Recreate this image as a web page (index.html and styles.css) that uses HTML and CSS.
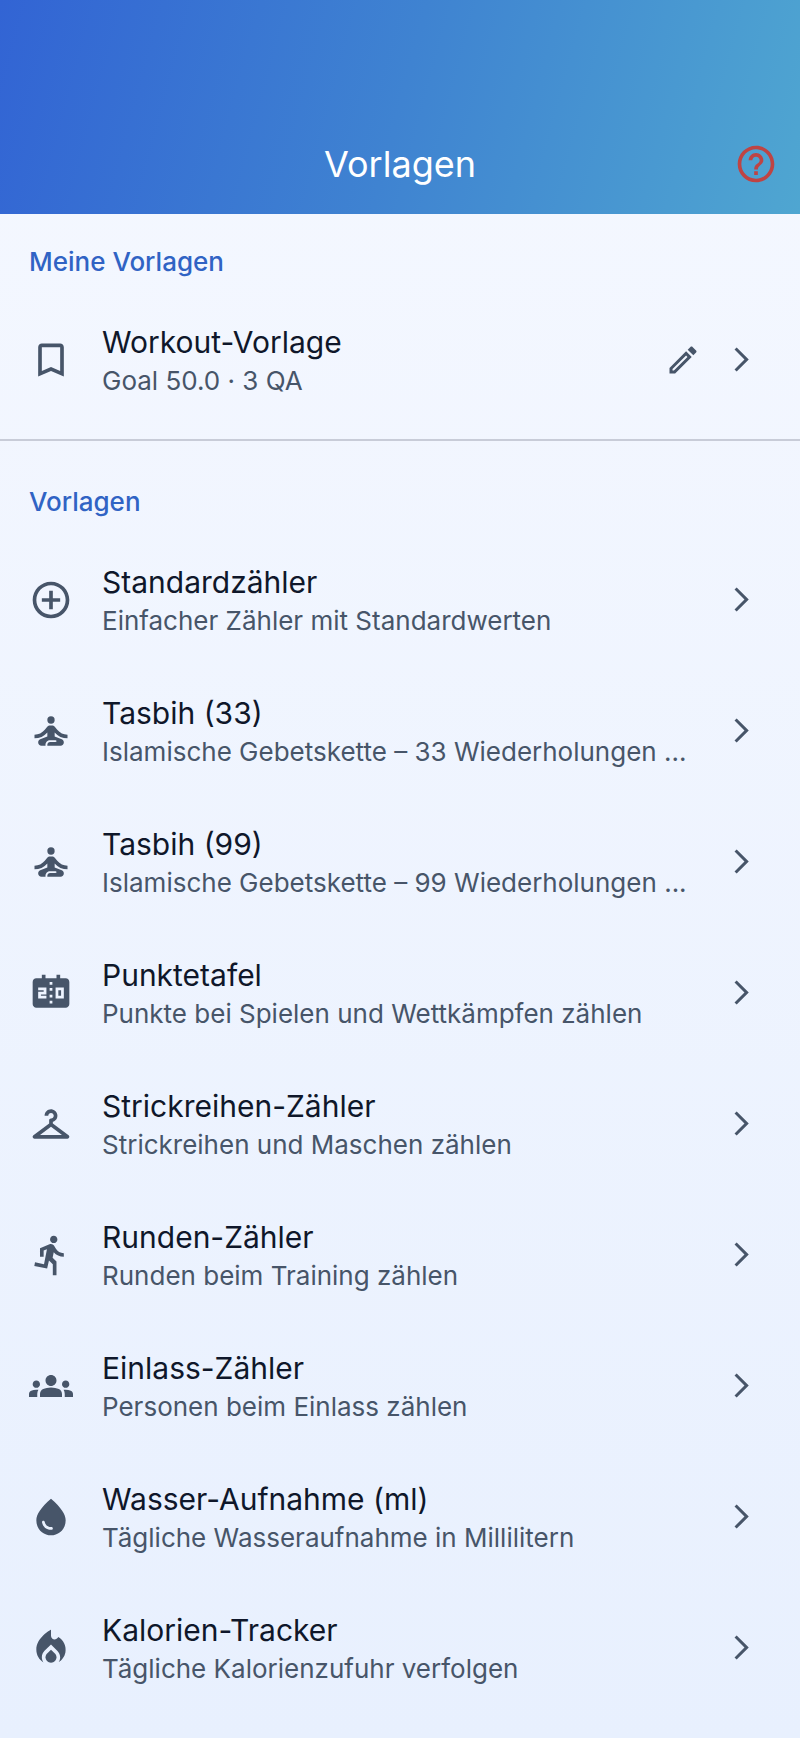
FILE: index.html
```
<!DOCTYPE html>
<html lang="de">
<head>
    <meta charset="UTF-8">
    <meta name="viewport" content="width=device-width, initial-scale=1.0">
    <title>Vorlagen</title>
    <link rel="stylesheet" href="styles.css">
</head>
<body>
    <!-- Icon set -->
    <svg class="sprite" aria-hidden="true">
        <symbol id="help" viewBox="0 0 24 24"><path d="M11 18h2v-2h-2v2zm1-16C6.48 2 2 6.48 2 12s4.48 10 10 10 10-4.48 10-10S17.52 2 12 2zm0 18c-4.41 0-8-3.59-8-8s3.59-8 8-8 8 3.59 8 8-3.59 8-8 8zm0-14c-2.21 0-4 1.79-4 4h2c0-1.1.9-2 2-2s2 .9 2 2c0 2-3 1.75-3 5h2c0-2.25 3-2.5 3-5 0-2.21-1.79-4-4-4z"/></symbol>
        <symbol id="chevron" viewBox="0 0 24 24"><path d="M6.23 20.23L8 22l10-10L8 2 6.23 3.77 14.46 12z"/></symbol>
        <symbol id="edit" viewBox="0 0 24 24"><path d="M14.06 9.02l.92.92L5.92 19H5v-.92l9.06-9.06M17.66 3c-.25 0-.51.1-.7.29l-1.83 1.83 3.75 3.75 1.83-1.83c.39-.39.39-1.02 0-1.41l-2.34-2.34c-.2-.2-.45-.29-.71-.29zm-3.6 3.19L3 17.25V21h3.75L17.81 9.94l-3.75-3.75z"/></symbol>
        <symbol id="bookmark" viewBox="0 0 24 24"><path d="M17 3H7c-1.1 0-1.99.9-1.99 2L5 21l7-3 7 3V5c0-1.1-.9-2-2-2zm0 15l-5-2.18L7 18V5h10v13z"/></symbol>
        <symbol id="add" viewBox="0 0 24 24"><path d="M13 7h-2v4H7v2h4v4h2v-4h4v-2h-4V7zm-1-5C6.48 2 2 6.48 2 12s4.48 10 10 10 10-4.48 10-10S17.52 2 12 2zm0 18c-4.41 0-8-3.59-8-8s3.59-8 8-8 8 3.59 8 8-3.59 8-8 8z"/></symbol>
        <symbol id="meditation" viewBox="0 0 24 24"><circle cx="12" cy="6" r="2"/><path d="M21 16v-2c-2.24 0-4.16-.96-5.6-2.68l-1.34-1.6C13.68 9.26 13.12 9 12.53 9h-1.05c-.6 0-1.15.26-1.53.72l-1.34 1.6C7.16 13.04 5.24 14 3 14v2c2.77 0 5.19-1.17 7-3.25V15l-3.88 1.55C5.45 16.82 5 17.48 5 18.21 5 19.2 5.8 20 6.79 20H9v-.5c0-1.38 1.12-2.5 2.5-2.5h3c.28 0 .5.22.5.5s-.22.5-.5.5h-3c-.83 0-1.5.67-1.5 1.5v.5h7.21c.99 0 1.79-.8 1.79-1.79 0-.73-.45-1.39-1.12-1.66L14 15v-2.25c1.81 2.08 4.23 3.25 7 3.25z"/></symbol>
        <symbol id="scoreboard" viewBox="0 0 24 24">
            <path d="M20 4h-3V2h-2v2H9V2H7v2H4c-1.1 0-2 .9-2 2v12c0 1.1.9 2 2 2h16c1.1 0 2-.9 2-2V6c0-1.1-.9-2-2-2z"/>
            <g class="board-line">
                <polyline points="5,9.75 8.75,9.75 8.75,12 5.75,12 5.75,14.25 9.5,14.25"/>
                <rect x="15.25" y="9.75" width="3" height="4.5"/>
                <path d="M12 6v1.5M12 9.25v1.5M12 13v1.5M12 16.25v1.5"/>
            </g>
        </symbol>
        <symbol id="hanger" viewBox="0 0 24 24"><path d="M21.6 18.2L13 11.75v-.91c1.65-.49 2.8-2.17 2.43-4.05-.26-1.31-1.3-2.4-2.61-2.7C10.54 3.57 8.5 5.3 8.5 7.5h2c0-.83.67-1.5 1.5-1.5s1.5.67 1.5 1.5c0 .84-.69 1.52-1.53 1.5-.54-.01-.97.45-.97.99v1.76L2.4 18.2c-.77.58-.36 1.8.6 1.8h18c.96 0 1.37-1.22.6-1.8zM6 18l6-4.5 6 4.5H6z"/></symbol>
        <symbol id="run" viewBox="0 0 24 24"><path d="M13.49 5.48c1.1 0 2-.9 2-2s-.9-2-2-2-2 .9-2 2 .9 2 2 2zm-3.6 13.9l1-4.4 2.1 2v6h2v-7.5l-2.1-2 .6-3c1.3 1.5 3.3 2.5 5.5 2.5v-2c-1.9 0-3.5-1-4.3-2.4l-1-1.6c-.4-.6-1-1-1.7-1-.3 0-.5.1-.8.1l-5.2 2.2v4.7h2v-3.4l1.8-.7-1.6 8.1-4.9-1-.4 2 7 1.4z"/></symbol>
        <symbol id="groups" viewBox="0 0 24 24"><path d="M12 12.75c1.63 0 3.07.39 4.24.9 1.08.48 1.76 1.56 1.76 2.73V18H6v-1.61c0-1.18.68-2.26 1.76-2.73 1.17-.52 2.61-.91 4.24-.91zM4 13c1.1 0 2-.9 2-2s-.9-2-2-2-2 .9-2 2 .9 2 2 2zm1.13 1.1c-.37-.06-.74-.1-1.13-.1-.99 0-1.93.21-2.78.58C.48 14.9 0 15.62 0 16.43V18h4.5v-1.61c0-.83.23-1.61.63-2.29zM20 13c1.1 0 2-.9 2-2s-.9-2-2-2-2 .9-2 2 .9 2 2 2zm4 3.43c0-.81-.48-1.53-1.22-1.85-.85-.37-1.79-.58-2.78-.58-.39 0-.76.04-1.13.1.4.68.63 1.46.63 2.29V18H24v-1.57zM12 6c1.66 0 3 1.34 3 3s-1.34 3-3 3-3-1.34-3-3 1.34-3 3-3z"/></symbol>
        <symbol id="drop" viewBox="0 0 24 24"><path fill-rule="evenodd" d="M12 2c-5.33 4.55-8 8.48-8 11.8 0 4.98 3.8 8.2 8 8.2s8-3.22 8-8.2c0-3.32-2.67-7.25-8-11.8zM7.83 14c.37 0 .67.26.74.62.41 2.22 2.28 2.98 3.64 2.87.43-.02.79.32.79.75 0 .4-.32.73-.72.75-2.13.13-4.62-1.09-5.19-4.12-.08-.45.28-.87.74-.87z"/></symbol>
        <symbol id="fire" viewBox="0 0 24 24"><path d="M12 12.9l-2.13 2.09c-.56.56-.87 1.29-.87 2.07C9 18.68 10.35 20 12 20s3-1.32 3-2.94c0-.78-.31-1.52-.87-2.07L12 12.9z"/><path d="M16 6l-.44.55C14.38 8.02 12 7.19 12 5.3V2S4 6 4 13c0 2.92 1.56 5.47 3.89 6.86-.56-.79-.89-1.76-.89-2.8 0-1.32.52-2.56 1.47-3.5L12 10.1l3.53 3.47c.95.93 1.47 2.17 1.47 3.5 0 1.02-.31 1.96-.85 2.75 1.89-1.15 3.29-3.06 3.71-5.3.66-3.55-1.07-6.9-3.86-8.52z"/></symbol>
    </svg>

    <header class="app-bar">
        <h1>Vorlagen</h1>
        <button type="button" class="icon-btn help-btn" aria-label="Hilfe"><svg class="icon"><use href="#help"/></svg></button>
    </header>

    <main>
        <section class="own">
            <h2>Meine Vorlagen</h2>
            <ul class="list">
                <li class="row">
                    <a href="#workout" class="row-link">
                        <svg class="icon"><use href="#bookmark"/></svg>
                        <span class="text"><span class="title">Workout-Vorlage</span><span class="sub">Goal 50.0 · 3 QA</span></span>
                    </a>
                    <button type="button" class="icon-btn" aria-label="Bearbeiten"><svg class="icon-edit"><use href="#edit"/></svg></button>
                    <svg class="chevron"><use href="#chevron"/></svg>
                </li>
            </ul>
        </section>

        <section>
            <h2>Vorlagen</h2>
            <ul class="list">
                <li class="row">
                    <a href="#standard" class="row-link">
                        <svg class="icon"><use href="#add"/></svg>
                        <span class="text"><span class="title">Standardzähler</span><span class="sub">Einfacher Zähler mit Standardwerten</span></span>
                    </a>
                    <svg class="chevron"><use href="#chevron"/></svg>
                </li>
                <li class="row">
                    <a href="#tasbih33" class="row-link">
                        <svg class="icon"><use href="#meditation"/></svg>
                        <span class="text"><span class="title">Tasbih (33)</span><span class="sub">Islamische Gebetskette – 33 Wiederholungen ...</span></span>
                    </a>
                    <svg class="chevron"><use href="#chevron"/></svg>
                </li>
                <li class="row">
                    <a href="#tasbih99" class="row-link">
                        <svg class="icon"><use href="#meditation"/></svg>
                        <span class="text"><span class="title">Tasbih (99)</span><span class="sub">Islamische Gebetskette – 99 Wiederholungen ...</span></span>
                    </a>
                    <svg class="chevron"><use href="#chevron"/></svg>
                </li>
                <li class="row">
                    <a href="#punktetafel" class="row-link">
                        <svg class="icon"><use href="#scoreboard"/></svg>
                        <span class="text"><span class="title">Punktetafel</span><span class="sub">Punkte bei Spielen und Wettkämpfen zählen</span></span>
                    </a>
                    <svg class="chevron"><use href="#chevron"/></svg>
                </li>
                <li class="row">
                    <a href="#strickreihen" class="row-link">
                        <svg class="icon"><use href="#hanger"/></svg>
                        <span class="text"><span class="title">Strickreihen-Zähler</span><span class="sub">Strickreihen und Maschen zählen</span></span>
                    </a>
                    <svg class="chevron"><use href="#chevron"/></svg>
                </li>
                <li class="row">
                    <a href="#runden" class="row-link">
                        <svg class="icon"><use href="#run"/></svg>
                        <span class="text"><span class="title">Runden-Zähler</span><span class="sub">Runden beim Training zählen</span></span>
                    </a>
                    <svg class="chevron"><use href="#chevron"/></svg>
                </li>
                <li class="row">
                    <a href="#einlass" class="row-link">
                        <svg class="icon"><use href="#groups"/></svg>
                        <span class="text"><span class="title">Einlass-Zähler</span><span class="sub">Personen beim Einlass zählen</span></span>
                    </a>
                    <svg class="chevron"><use href="#chevron"/></svg>
                </li>
                <li class="row">
                    <a href="#wasser" class="row-link">
                        <svg class="icon"><use href="#drop"/></svg>
                        <span class="text"><span class="title">Wasser-Aufnahme (ml)</span><span class="sub">Tägliche Wasseraufnahme in Millilitern</span></span>
                    </a>
                    <svg class="chevron"><use href="#chevron"/></svg>
                </li>
                <li class="row">
                    <a href="#kalorien" class="row-link">
                        <svg class="icon"><use href="#fire"/></svg>
                        <span class="text"><span class="title">Kalorien-Tracker</span><span class="sub">Tägliche Kalorienzufuhr verfolgen</span></span>
                    </a>
                    <svg class="chevron"><use href="#chevron"/></svg>
                </li>
            </ul>
        </section>
    </main>
</body>
</html>
```
FILE: styles.css
```
* {
    box-sizing: border-box;
}
body {
    margin: 0;
    min-height: 100vh;
    font-family: Inter, "Liberation Sans", sans-serif;
    color: #0f172a;
    background: linear-gradient(#f5f8ff, #e8f0fe);
}
.sprite {
    display: none;
}
svg {
    display: block;
    flex-shrink: 0;
    fill: currentColor;
}
.board-line {
    fill: none;
    stroke: #eef4ff;
    stroke-width: 1.5;
}

/* App bar */
.app-bar {
    display: grid;
    grid-template-columns: 88px 1fr 88px;
    align-items: center;
    padding-top: 114px;
    height: 214px;
    background: linear-gradient(105deg, #3264d4, #3f83d1 50%, #4fa6d1);
}
h1 {
    grid-column: 2;
    margin: 0;
    text-align: center;
    font-size: 36px;
    line-height: 44px;
    font-weight: 400;
    color: #fff;
}
.icon-btn {
    display: flex;
    align-items: center;
    justify-content: center;
    width: 88px;
    height: 88px;
    padding: 0;
    border: none;
    background: none;
    color: #475569;
    cursor: pointer;
}
.help-btn {
    color: #be4444;
}

/* Lists */
h2 {
    margin: 0;
    padding: 30px 29px 14px;
    font-size: 26px;
    line-height: 36px;
    font-weight: 500;
    color: #3063c4;
}
.own {
    padding-bottom: 14px;
    border-bottom: 2px solid #c8ccd8;
}
.own + section {
    padding-top: 13px;
    padding-bottom: 24px;
}
.list {
    margin: 0;
    padding: 0;
    list-style: none;
}
.row {
    display: flex;
    align-items: center;
    height: 131px;
    padding: 0 44px 0 29px;
    color: #475569;
}
.row-link {
    display: flex;
    flex: 1;
    align-items: center;
    gap: 29px;
    min-width: 0;
    color: inherit;
    text-decoration: none;
}
.icon {
    width: 44px;
    height: 44px;
}
.icon-edit {
    width: 36px;
    height: 36px;
}
.chevron {
    width: 29px;
    height: 29px;
}
.text {
    display: flex;
    flex-direction: column;
    min-width: 0;
}
.title {
    font-size: 30px;
    line-height: 42px;
    color: #0f172a;
}
.sub {
    font-size: 26px;
    line-height: 36px;
    white-space: nowrap;
}
```
